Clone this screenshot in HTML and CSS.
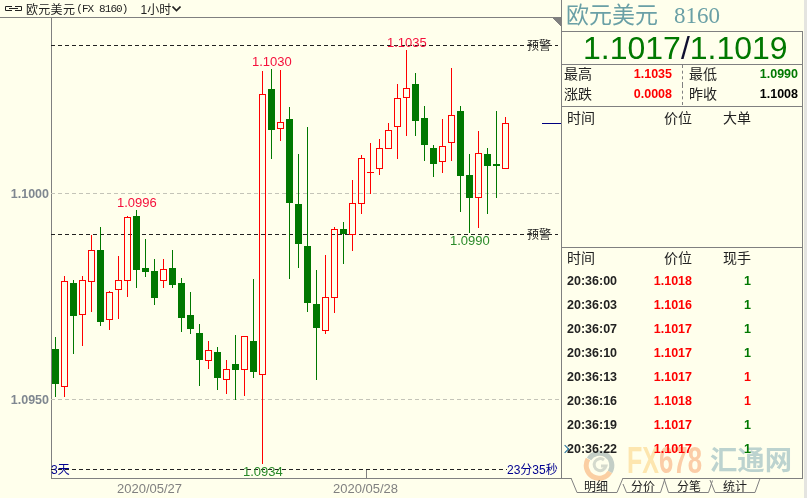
FILE: index.html
```html
<!DOCTYPE html>
<html lang="zh-CN">
<head>
    <meta charset="UTF-8">
    <title>欧元美元 8160</title>
    <link rel="stylesheet" href="styles.css">
</head>
<body>
    <div id="screen">

        <!-- K线图区域 -->
        <div id="chart-pane">
            <div id="chart-title">
                <svg class="link-icon" width="17" height="6" viewBox="0 0 17 6">
                    <path d="M7 .5H.5v4H7M4 2.5h9M10 .5h6.500v4H10"/>
                </svg>
                <span class="symbol">欧元美元</span><span class="code">(FX 8160)</span>
                <span class="period">1小时</span>
                <svg class="chevron" width="9" height="6" viewBox="0 0 9 6">
                    <path d="M.5 .5l4 4 4-4"/>
                </svg>
            </div>
            <svg id="chart" width="561" height="480" viewBox="0 18 561 480" shape-rendering="crispEdges">
                <path class="corner" d="M552 18h9v9z"/>
                <path class="axis" d="M51.5 18V478.5H561M366.5 469V478"/>
                <path class="alert-line" d="M51 45.5H558M51 234.5H558M51 469.5H507"/>
                <path class="grid-line" d="M51 193.5H561M51 399.5H561"/>
                <path class="cursor-line" d="M542 123.5H561"/>
                <g id="candles"></g>
                <text class="axis-label" x="49" y="198" text-anchor="end">1.1000</text>
                <text class="axis-label" x="49" y="404" text-anchor="end">1.0950</text>
                <text class="date-label" x="117" y="493">2020/05/27</text>
                <text class="date-label" x="333" y="493">2020/05/28</text>
                <text class="high-label" x="387" y="47">1.1035</text>
                <text class="high-label" x="252" y="66">1.1030</text>
                <text class="high-label" x="117" y="207">1.0996</text>
                <text class="low-label" x="450" y="245">1.0990</text>
                <text class="low-label" x="243" y="476">1.0934</text>
                <text class="alert-label" x="527" y="50">预警</text>
                <text class="alert-label" x="527" y="239">预警</text>
                <text class="span-label" x="51" y="474">3天</text>
                <text class="span-label" x="507" y="474">23分35秒</text>
            </svg>
        </div>

        <!-- 右侧报价面板 -->
        <div id="quote-panel">
            <div id="quote-name">欧元美元<span class="quote-code">8160</span></div>
            <div class="quote-box">
                <div id="quote-price">1.1017<span class="slash">/</span>1.1019</div>
                <div id="quote-stats">
                    <div class="stat stat-left"><span>最高</span><b class="red">1.1035</b></div>
                    <div class="stat stat-right"><span>最低</span><b class="green">1.0990</b></div>
                    <div class="stat stat-left"><span>涨跌</span><b class="red">0.0008</b></div>
                    <div class="stat stat-right"><span>昨收</span><b class="black">1.1008</b></div>
                </div>
                <div id="big-orders">
                    <div class="list-head"><span>时间</span><span>价位</span><span>大单</span></div>
                </div>
                <div id="ticks">
                    <div class="list-head"><span>时间</span><span>价位</span><span>现手</span></div>
                    <div class="tick"><b>20:36:00</b><b class="red">1.1018</b><b class="green">1</b></div>
                    <div class="tick"><b>20:36:03</b><b class="red">1.1016</b><b class="green">1</b></div>
                    <div class="tick"><b>20:36:07</b><b class="red">1.1017</b><b class="green">1</b></div>
                    <div class="tick"><b>20:36:10</b><b class="red">1.1017</b><b class="green">1</b></div>
                    <div class="tick"><b>20:36:13</b><b class="red">1.1017</b><b class="red">1</b></div>
                    <div class="tick"><b>20:36:16</b><b class="red">1.1018</b><b class="red">1</b></div>
                    <div class="tick"><b>20:36:19</b><b class="red">1.1017</b><b class="green">1</b></div>
                    <div class="tick tick-last"><b>20:36:22</b><b class="red">1.1017</b><b class="green">1</b></div>
                </div>
            </div>
            <svg id="tabs" width="243" height="20" viewBox="561 478 243 20">
                <path d="M623 484l3.500 8.500h34l4.500-14M664 478.500l4.500 14h40l4-12M710 480l5 12.500h40l5-14"/>
                <path d="M571 478l6 14.500h40l6-14.500"/>
                <text x="584" y="491">明细</text>
                <text x="631" y="491">分价</text>
                <text x="677" y="491">分笔</text>
                <text x="723" y="491">统计</text>
            </svg>

            <!-- 水印 -->
            <svg id="watermark" width="212" height="58" viewBox="0 -10 212 58">
                <path class="wm-ring" d="M6 12A12 12 0 1 1 27 25"/>
                <path class="wm-arc" d="M27 25A12 12 0 0 1 5 12"/>
                <path class="wm-g" d="M21 13a6 6 0 1 0 2 6h-5"/>
                <text class="wm-fx" x="44" y="26" textLength="32" lengthAdjust="spacingAndGlyphs">FX</text>
                <text class="wm-num" x="76" y="26" textLength="43" lengthAdjust="spacingAndGlyphs">678</text>
                <text class="wm-cn" x="127" y="23" textLength="82" lengthAdjust="spacingAndGlyphs">汇通网</text>
            </svg>
        </div>
    </div>

    <script src="chart.js"></script>
</body>
</html>
```

FILE: styles.css
```css
* {
    margin: 0;
    padding: 0;
    box-sizing: border-box;
}
html, body {
    height: 100%;
    overflow: hidden;
}
body {
    background-color: #ffffec;
    color: #222;
    font-family: "Liberation Sans", "Noto Sans CJK SC", sans-serif;
}
#screen {
    display: flex;
    width: 807px;
    height: 498px;
}

/* K线图 */
#chart-pane {
    width: 561px;
    flex: none;
}
#chart-title {
    display: flex;
    align-items: center;
    height: 18px;
    padding-left: 5px;
    border-bottom: 1px solid #808080;
    font-size: 12px;
}
.link-icon path {
    fill: none;
    stroke: #222;
}
.symbol {
    margin-left: 4px;
    letter-spacing: .3px;
}
.code {
    margin-left: 1px;
    font-family: "Liberation Mono", monospace;
    font-size: 11px;
    letter-spacing: -.9px;
}
.period {
    margin-left: 13px;
}
.chevron {
    margin-left: 1px;
}
.chevron path {
    fill: none;
    stroke: #222;
    stroke-width: 1.6;
}
#chart {
    display: block;
}
#chart text {
    font-size: 13px;
    shape-rendering: auto;
}
.corner {
    fill: #808080;
}
.axis {
    fill: none;
    stroke: #808080;
}
.alert-line {
    fill: none;
    stroke: #222;
    stroke-dasharray: 4 3;
}
.grid-line {
    fill: none;
    stroke: #c4c4b8;
    stroke-dasharray: 4 3;
}
.cursor-line {
    stroke: #000080;
}
.wick-up, .body-down, .wick-down {
    stroke: none;
}
.wick-up {
    fill: #ff0000;
}
.wick-down, .body-down {
    fill: #007800;
}
.body-up {
    fill: none;
    stroke: #ff0000;
}
#chart .axis-label {
    fill: #7f8790;
    font-size: 12.5px;
    font-weight: bold;
}
.date-label {
    fill: #808080;
}
.high-label {
    fill: #f5103c;
}
.low-label {
    fill: #2a8a2a;
}
#chart .alert-label {
    fill: #222;
    font-size: 12px;
}
#chart .span-label {
    fill: #000090;
    font-size: 12px;
}

/* 报价面板 */
#quote-panel {
    position: relative;
    width: 246px;
    flex: none;
    border-right: 3px solid #e4e4e0;
    height: 498px;
}
#quote-name {
    height: 31px;
    padding-left: 4px;
    border-left: 1px solid #808080;
    color: #6aa0a6;
    font-size: 23px;
    line-height: 31px;
}
.quote-code {
    margin-left: 16px;
    font-family: "Liberation Serif", serif;
}
.quote-box {
    width: 242px;
    height: 448px;
    border: 1px solid #808080;
}
#quote-price {
    height: 33px;
    padding-left: 21px;
    border-bottom: 1px solid #808080;
    color: #007800;
    font-size: 32px;
    line-height: 33px;
}
.slash {
    color: #101030;
}
#quote-stats {
    display: grid;
    grid-template-columns: 121px 119px;
    grid-auto-rows: 20px;
    height: 42px;
    border-bottom: 1px solid #808080;
}
.stat {
    display: flex;
    justify-content: space-between;
    align-items: center;
    padding-bottom: 2px;
    font-size: 14px;
}
.stat span {
    margin-bottom: 2px;
}
.stat b {
    font-size: 12.5px;
}
.stat-left {
    padding-left: 2px;
    padding-right: 10px;
    border-right: 1px dashed #808080;
}
.stat-right {
    padding-left: 6px;
    padding-right: 4px;
}
.red {
    color: #ff0000;
}
.green {
    color: #007800;
}
.black {
    color: #000;
}
#big-orders {
    height: 141px;
    border-bottom: 1px solid #808080;
}
.list-head, .tick {
    display: grid;
    grid-template-columns: 65px 60px 59px;
    padding-left: 5px;
}
.list-head {
    font-size: 14px;
}
.list-head span:not(:first-child), .tick b:not(:first-child) {
    text-align: right;
}
#big-orders .list-head {
    height: 22px;
    line-height: 22px;
}
#ticks .list-head {
    height: 21px;
    line-height: 20px;
}
.tick {
    position: relative;
    z-index: 1;
    height: 24px;
    line-height: 24px;
    font-size: 12.5px;
}
.tick-last::before {
    content: "";
    position: absolute;
    left: 0;
    top: 9px;
    width: 5px;
    height: 5px;
    border-top: 1.5px solid #1a6a9a;
    border-right: 1.5px solid #1a6a9a;
    transform: rotate(45deg);
}

/* 底部标签 */
#tabs {
    display: block;
    margin-top: -1px;
}
#tabs path {
    fill: none;
    stroke: #808080;
}
#tabs path + path {
    fill: #ffffec;
}
#tabs text {
    fill: #222;
    font-size: 12px;
}
#watermark {
    position: absolute;
    left: 22px;
    top: 437px;
    mix-blend-mode: multiply;
}
.wm-ring, .wm-arc, .wm-g {
    fill: none;
    stroke-width: 5;
}
.wm-ring {
    stroke: #c3ced6;
}
.wm-arc {
    stroke: #fbcfb0;
}
.wm-g {
    stroke: #d5dade;
    stroke-width: 3;
}
.wm-fx, .wm-num {
    font-size: 36px;
    font-weight: bold;
}
.wm-fx {
    fill: #fde6bd;
}
.wm-num {
    fill: #fbcdb5;
}
.wm-cn {
    fill: #bcd3e0;
    font-size: 27px;
    font-weight: bold;
}
```

FILE: chart.js
```js
// K线数据: [最高, 开/收上沿, 开/收下沿, 最低, 1=阳线 0=阴线]
var candles = [
    [337, 349, 384, 397, 0], [276, 281, 386, 397, 1], [280, 283, 316, 354, 0], [276, 280, 314, 346, 1],
    [235, 250, 281, 312, 1], [227, 250, 322, 326, 0], [291, 292, 319, 330, 1], [256, 280, 289, 319, 1],
    [216, 217, 280, 297, 1], [210, 216, 270, 288, 0], [239, 268, 272, 277, 0], [259, 271, 298, 305, 0],
    [259, 269, 280, 288, 1], [250, 268, 285, 288, 0], [278, 283, 318, 332, 0], [292, 315, 329, 334, 0],
    [324, 333, 360, 386, 0], [341, 350, 360, 369, 1], [347, 352, 378, 390, 0], [360, 369, 379, 394, 1],
    [335, 364, 370, 400, 0], [336, 336, 369, 396, 1], [279, 341, 372, 378, 0], [71, 94, 374, 464, 1],
    [69, 89, 130, 159, 0], [70, 122, 128, 141, 1], [107, 119, 203, 279, 0], [154, 204, 244, 268, 0],
    [127, 246, 303, 312, 0], [270, 304, 328, 380, 0], [255, 297, 330, 334, 1], [227, 229, 297, 313, 1],
    [222, 229, 234, 264, 0], [180, 203, 234, 251, 1], [155, 158, 203, 214, 1], [143, 172, 172, 194, 1],
    [139, 148, 168, 175, 1], [123, 130, 148, 148, 1], [84, 98, 126, 159, 1], [50, 88, 97, 136, 1],
    [73, 84, 121, 136, 0], [106, 118, 145, 161, 0], [145, 148, 164, 177, 0], [119, 146, 161, 173, 1],
    [68, 115, 142, 161, 1], [106, 111, 176, 212, 0], [154, 175, 198, 233, 0], [131, 153, 197, 228, 1],
    [148, 154, 166, 214, 0], [111, 164, 166, 198, 0], [117, 123, 168, 169, 1]
];

var group = document.getElementById("candles");

function addRect(cls, x, y, w, h) {
    var rect = document.createElementNS("http://www.w3.org/2000/svg", "rect");
    rect.setAttribute("class", cls);
    rect.setAttribute("x", x);
    rect.setAttribute("y", y);
    rect.setAttribute("width", w);
    rect.setAttribute("height", h);
    group.appendChild(rect);
}

candles.forEach(function(c, i) {
    var x = 55 + 9 * i;
    if (c[4]) {
        addRect("wick-up", x, c[0], 1, c[1] - c[0]);
        addRect("wick-up", x, c[2], 1, c[3] - c[2]);
        if (c[1] === c[2]) {
            addRect("wick-up", x - 3, c[1], 7, 1);
        } else {
            addRect("body-up", x - 2.5, c[1] + 0.5, 6, c[2] - c[1]);
        }
    } else {
        addRect("wick-down", x, c[0], 1, c[3] - c[0]);
        addRect("body-down", x - 3, c[1], 7, c[2] - c[1]);
    }
});
```
